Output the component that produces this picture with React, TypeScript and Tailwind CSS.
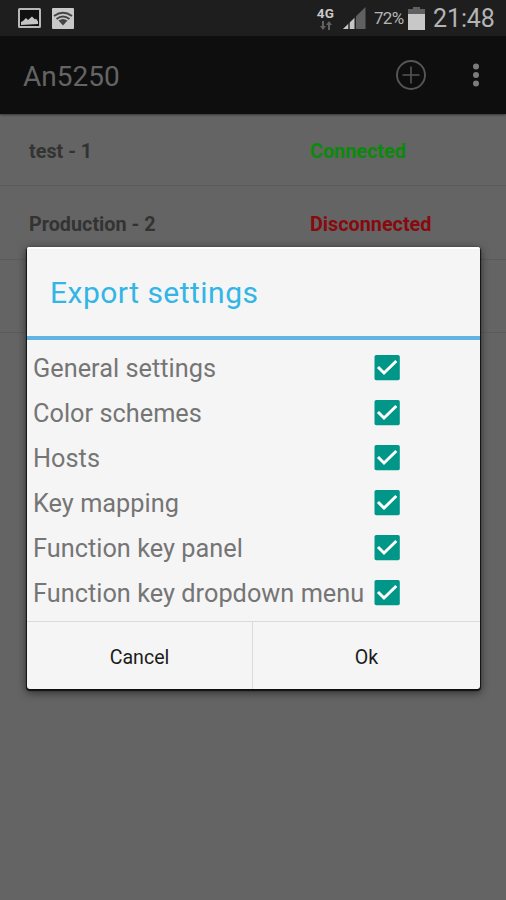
import React from 'react';

const options = [
  'General settings',
  'Color schemes',
  'Hosts',
  'Key mapping',
  'Function key panel',
  'Function key dropdown menu',
];

const sessions = [
  { name: 'test - 1', state: 'Connected', color: 'text-[#0a8a0a]', row: 'h-[72px] pt-[5px]' },
  { name: 'Production - 2', state: 'Disconnected', color: 'text-[#860a0e]', row: 'h-[74px] pt-[5px]' },
];

function StatusBar() {
  return (
    <header className="flex h-9 shrink-0 items-center bg-[#1e1e1e] pl-[18px] pr-[10px] text-[#b4b4b4]">
      <svg width="23" height="20" viewBox="0 0 23 20">
        <rect x="1" y="1" width="21" height="18" rx="0.5" fill="#111" stroke="#b8b8b8" strokeWidth="2" />
        <path d="M3 17v-3l2-1 3-3 2 2 4-3.500 3 3 1-1 2 3v2.500z" fill="#c4c4c4" />
      </svg>
      <svg className="ml-[11px]" width="22" height="21" viewBox="0 0 22 21">
        <rect width="22" height="21" rx="1" fill="#c8c8c8" />
        <g fill="none" stroke="#444" strokeWidth="2">
          <path d="M2 8Q11 1.500 20 8" />
          <path d="M4.500 11Q11 6 17.500 11" />
        </g>
        <path d="M6.500 12.500Q11 9.500 15.500 12.500L11 17.500z" fill="#444" />
      </svg>
      <div className="ml-auto flex w-[19px] flex-col items-center">
        <span className="h-[13px] text-[13.500px] font-bold leading-[13px] tracking-[0.2px] text-[#c8c8c8]">4G</span>
        <svg className="mt-px" width="14" height="9" viewBox="0 0 14 9">
          <path d="M3 0h2v5h2L4 9 1 5h2zM9 9h2V4h2l-3-4-3 4h2z" fill="#626262" />
        </svg>
      </div>
      <svg className="ml-[8px]" width="23" height="22" viewBox="0 0 23 22">
        <path d="M0 22L22.500 0v22z" fill="#606060" />
        <path d="M0 22L12 10.500V22z" fill="#c6c6c6" />
        <path d="M6 14v8M12.200 8v14" stroke="#1e1e1e" strokeWidth="1.400" />
      </svg>
      <span className="ml-[8px] w-[31px] whitespace-nowrap pt-px text-[17px] tracking-[-0.7px]">72%</span>
      <svg className="ml-[3px]" width="17" height="23" viewBox="0 0 17 23">
        <path d="M5 0h7v2h5v6H0V2h5z" fill="#606060" />
        <path d="M0 7h17v16H0z" fill="#c8c8c8" />
      </svg>
      <span className="ml-[8px] w-[63px] whitespace-nowrap text-[25px] leading-none tracking-[-0.1px]">21:48</span>
    </header>
  );
}

function Dialog() {
  return (
    <section className="absolute left-[27px] top-[247px] flex h-[442px] w-[453px] flex-col rounded-[3px] bg-[#f5f5f5] shadow-[0_1px_1px_1px_rgba(0,0,0,0.75),0_3px_9px_1px_rgba(0,0,0,0.5)]">
      <div className="h-[2px] shrink-0 rounded-t-[3px] bg-white" />
      <h2 className="flex h-[87px] shrink-0 items-center whitespace-nowrap pl-[23px] text-[30px] tracking-[0.48px] text-[#33b5e5]">
        Export settings
      </h2>
      <div className="h-[4px] shrink-0 bg-[#62b5e3]" />
      <ul className="flex h-[281px] flex-col pl-[6px] pt-[5px]">
        {options.map((label) => (
          <li key={label} className="flex h-[45px] items-center">
            <span className="w-[341px] whitespace-nowrap pt-[2px] text-[25.300px] tracking-[0.02px] text-[#757575]">{label}</span>
            <svg width="26" height="26" viewBox="0 0 26 26" role="img" aria-label="Checked">
              <rect x="0.500" y="0" width="25.300" height="25.300" rx="1.800" fill="#009688" />
              <path d="M4 12L10 18L22.300 6" fill="none" stroke="#fff" strokeWidth="3" />
            </svg>
          </li>
        ))}
      </ul>
      <div className="flex h-[68px] border-t border-[#dadada] text-[19.600px] text-[#1c1c1c]">
        <button className="w-[226px] border-r border-[#dadada] pt-[4px]">Cancel</button>
        <button className="flex-1 pt-[4px]">Ok</button>
      </div>
    </section>
  );
}

export default function App() {
  return (
    <main className="relative flex h-[900px] w-[506px] flex-col overflow-hidden bg-[#646464] font-['Roboto',sans-serif]">
      <StatusBar />
      <nav className="flex h-[78px] shrink-0 items-center bg-[#0e0e0e] pl-[23px] pr-[26px] shadow-[0_1px_2px_rgba(0,0,0,0.45)]">
        <h1 className="pt-[3px] text-[28px] text-[#646464]">An5250</h1>
        <svg className="ml-auto" width="32" height="32" viewBox="0 0 32 32" fill="none" stroke="#565656">
          <circle cx="16" cy="16" r="14" strokeWidth="1.900" />
          <path d="M16 7.500v17M7.500 16h17" strokeWidth="1.600" />
        </svg>
        <svg className="ml-[45px]" width="8" height="26" viewBox="0 0 8 26" fill="#7c7c7c">
          <circle cx="4" cy="4.500" r="3" />
          <circle cx="4" cy="13" r="3" />
          <circle cx="4" cy="21.500" r="3" />
        </svg>
      </nav>
      {sessions.map((s) => (
        <div key={s.name} className={`flex shrink-0 items-center border-b border-[#5b5b5b] pl-[29px] text-[19.800px] font-bold ${s.row}`}>
          <span className="w-[281px] text-[#333333]">{s.name}</span>
          <span className={s.color}>{s.state}</span>
        </div>
      ))}
      <div className="h-[73px] shrink-0 border-b border-[#5b5b5b]" />
      <Dialog />
    </main>
  );
}
